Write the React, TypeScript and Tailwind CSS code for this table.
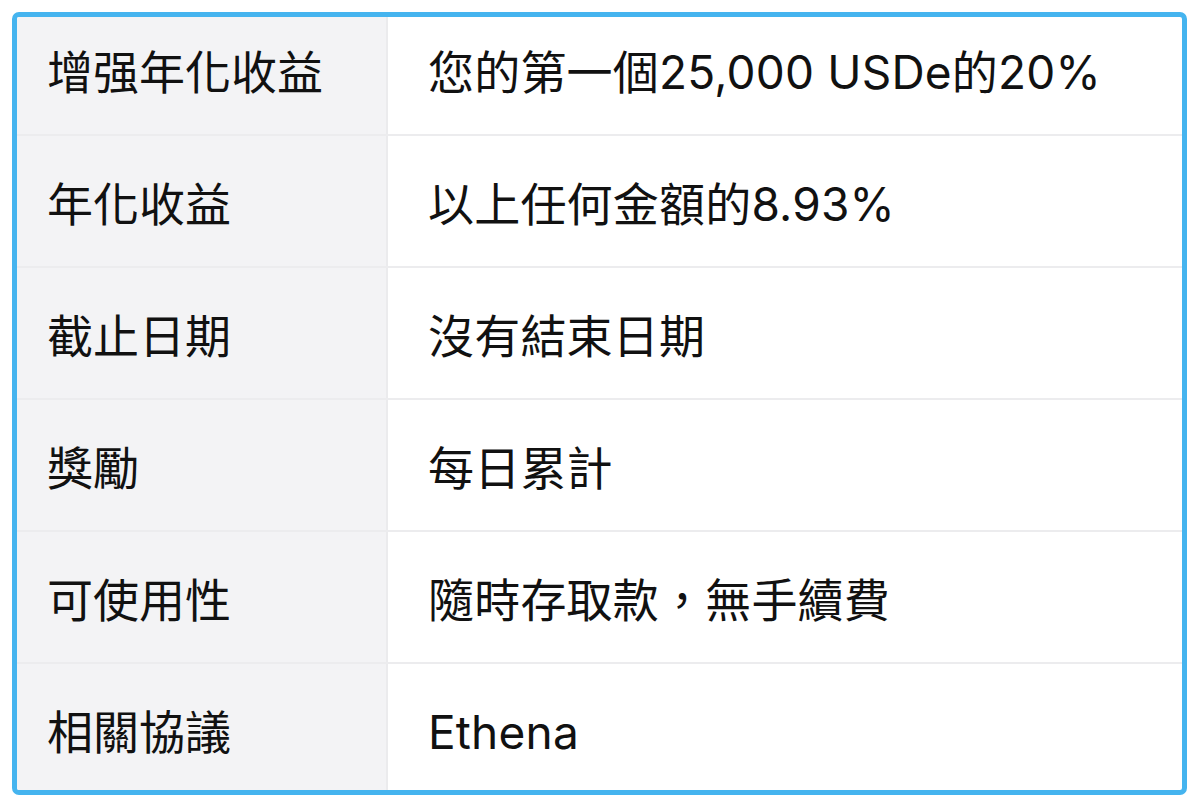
import React from 'react';

type Row = {
  label: string;
  value: string;
};

const rows: Row[] = [
  { label: '增强年化收益', value: '您的第一個25,000 USDe的20%' },
  { label: '年化收益', value: '以上任何金額的8.93%' },
  { label: '截止日期', value: '沒有結束日期' },
  { label: '獎勵', value: '每日累計' },
  { label: '可使用性', value: '隨時存取款，無手續費' },
  { label: '相關協議', value: 'Ethena' },
];

export default function App() {
  return (
    <div className="w-[1200px] h-[808px] bg-white p-[12px] font-['Inter','Noto_Sans_CJK_TC',sans-serif] text-[#111]">
      <div className="w-[1175px] h-[783px] border-[5px] border-[#45b4ef] rounded-[7px] overflow-hidden bg-white">
        <div className="flex flex-col -mt-[13px]">
          {rows.map((row) => (
            <div key={row.label} className="flex h-[132px] shrink-0 border-b-2 border-[#ececee]">
              <div className="w-[371px] shrink-0 flex items-center pl-[30px] pt-[6px] bg-[#f3f3f5] border-r-2 border-[#ebebed] text-[46px]">
                {row.label}
              </div>
              <div className="flex-1 flex items-center pl-[40px] pt-[6px] text-[46px] tracking-[0.2px]">
                {row.value}
              </div>
            </div>
          ))}
        </div>
      </div>
    </div>
  );
}
